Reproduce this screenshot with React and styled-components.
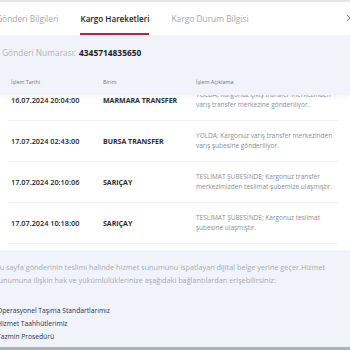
import { useLayoutEffect, useRef } from "react";
import styled, { createGlobalStyle } from "styled-components";
import { X } from "lucide-react";

const FONT = `"Open Sans", "Noto Sans", sans-serif`;

const rows = [
  {
    date: "16.07.2024 20:04:00",
    unit: "MARMARA TRANSFER",
    desc: "YOLDA; Kargonuz çıkış transfer merkezinden varış transfer merkezine gönderiliyor.",
  },
  {
    date: "17.07.2024 02:43:00",
    unit: "BURSA TRANSFER",
    desc: "YOLDA; Kargonuz varış transfer merkezinden varış şubesine gönderiliyor.",
  },
  {
    date: "17.07.2024 20:10:06",
    unit: "SARIÇAY",
    desc: "TESLİMAT ŞUBESİNDE; Kargonuz transfer merkezimizden teslimat şubemize ulaşmıştır.",
  },
  {
    date: "17.07.2024 10:18:00",
    unit: "SARIÇAY",
    desc: "TESLİMAT ŞUBESİNDE; Kargonuz teslimat şubesine ulaşmıştır.",
  },
];

export default function App() {
  const bodyRef = useRef(null);

  useLayoutEffect(() => {
    if (bodyRef.current) bodyRef.current.scrollTop = 16;
  }, []);

  return (
    <>
      <GlobalStyle />
      <Page>
        <TopEdge />
        <Tabs>
          <Tab>Gönderi Bilgileri</Tab>
          <Tab $active>Kargo Hareketleri</Tab>
          <Tab>Kargo Durum Bilgisi</Tab>
          <CloseBtn>
            <X size={12} strokeWidth={1.6} />
          </CloseBtn>
        </Tabs>
        <Content>
          <Shipment>
            Gönderi Numarası: <b>4345714835650</b>
          </Shipment>
          <Table>
            <HeadRow>
              <HeadCell>İşlem Tarihi</HeadCell>
              <HeadCell>Birim</HeadCell>
              <HeadCell>İşlem Açıklama</HeadCell>
            </HeadRow>
            <Body ref={bodyRef}>
              <BodyInner>
                {rows.map((r, i) => (
                  <Row key={i}>
                    <DateCell>{r.date}</DateCell>
                    <UnitCell>{r.unit}</UnitCell>
                    <DescCell>{r.desc}</DescCell>
                  </Row>
                ))}
              </BodyInner>
            </Body>
          </Table>
          <Footer>
            <Note>
              Bu sayfa gönderinin teslimi halinde hizmet sunumunu ispatlayan dijital belge yerine
              geçer.Hizmet sunumuna ilişkin hak ve yükümlülüklerinize aşağıdaki bağlantılardan
              erişebilirsiniz:
            </Note>
            <Links>
              <LinkItem>Operasyonel Taşıma Standartlarımız</LinkItem>
              <LinkItem>Hizmet Taahhütlerimiz</LinkItem>
              <LinkItem>Tazmin Prosedürü</LinkItem>
            </Links>
          </Footer>
        </Content>
        <BottomEdge />
      </Page>
    </>
  );
}

const GlobalStyle = createGlobalStyle`
  html, body {
    margin: 0;
    padding: 0;
    background: #f0f3f9;
    overflow: hidden;
  }
  * {
    box-sizing: border-box;
  }
`;

const Page = styled.div`
  width: 350px;
  height: 350px;
  display: flex;
  flex-direction: column;
  font-family: ${FONT};
  overflow: hidden;
`;

const TopEdge = styled.div`
  height: 2px;
  background: #e2e4e8;
`;

const Tabs = styled.div`
  height: 33px;
  background: #fff;
  display: flex;
  align-items: stretch;
  padding-left: 0;
  margin-left: -4px;
  gap: 22px;
  overflow: hidden;
`;

const Tab = styled.div`
  display: flex;
  align-items: center;
  padding-top: 1px;
  font-size: ${(p) => (p.$active ? "8.1px" : "8.4px")};
  white-space: nowrap;
  color: ${(p) => (p.$active ? "#1d1d2b" : "#a3a6ae")};
  font-weight: ${(p) => (p.$active ? 600 : 400)};
  border-bottom: 2px solid ${(p) => (p.$active ? "#c8202c" : "transparent")};
`;

const CloseBtn = styled.div`
  flex-shrink: 0;
  margin-left: auto;
  width: 12px;
  margin-right: -6px;
  display: flex;
  align-items: center;
  color: #4a4d55;
  padding-bottom: 2px;

  svg {
    display: block;
  }
`;

const Content = styled.div`
  flex: 1;
  display: flex;
  flex-direction: column;
`;

const Shipment = styled.div`
  height: 33px;
  display: flex;
  align-items: center;
  padding-left: 2px;
  padding-top: 2px;
  gap: 3px;
  font-size: 8.4px;
  color: #b0b3ba;
  white-space: nowrap;

  b {
    color: #1d1d2b;
    font-weight: 700;
  }
`;

const Table = styled.div`
  display: flex;
  flex-direction: column;
`;

const columns = `92px 93px 1fr`;

const HeadRow = styled.div`
  height: 27px;
  display: grid;
  grid-template-columns: ${columns};
  align-items: center;
  padding: 0 14px 0 11px;
  background: #f0f3f9;
  box-shadow: 0 2px 4px rgba(30, 40, 70, 0.05);
  position: relative;
  z-index: 1;
`;

const HeadCell = styled.div`
  font-size: 5.4px;
  color: #707480;
  white-space: nowrap;
`;

const Body = styled.div`
  height: 155px;
  overflow: hidden;
  background: #fff;
`;

const BodyInner = styled.div`
  padding: 0 12px 6px 8px;
`;

const Row = styled.div`
  height: 41px;
  display: grid;
  grid-template-columns: ${columns};
  align-items: center;
  padding-left: 3px;
  border-bottom: 1px solid #eef0f3;
`;

const DateCell = styled.div`
  font-size: 7.3px;
  font-weight: 600;
  color: #23232f;
  white-space: nowrap;
`;

const UnitCell = styled.div`
  font-size: 7px;
  font-weight: 700;
  color: #2a2a3a;
  white-space: nowrap;
`;

const DescCell = styled.div`
  font-size: 6.5px;
  line-height: 10.5px;
  color: #8a8d96;
`;

const Footer = styled.div`
  flex: 1;
  display: flex;
  flex-direction: column;
  padding: 11px 12px 0 0;
  margin-left: -5px;
`;

const Note = styled.div`
  font-size: 7.3px;
  line-height: 13px;
  color: #a8abb3;
`;

const Links = styled.div`
  display: flex;
  flex-direction: column;
  margin-top: 17px;
  padding-left: 2px;
`;

const LinkItem = styled.div`
  font-size: 6.7px;
  line-height: 13px;
  color: #27315e;
  white-space: nowrap;
`;

const BottomEdge = styled.div`
  height: 3px;
  background: #aeb2ba;
`;
